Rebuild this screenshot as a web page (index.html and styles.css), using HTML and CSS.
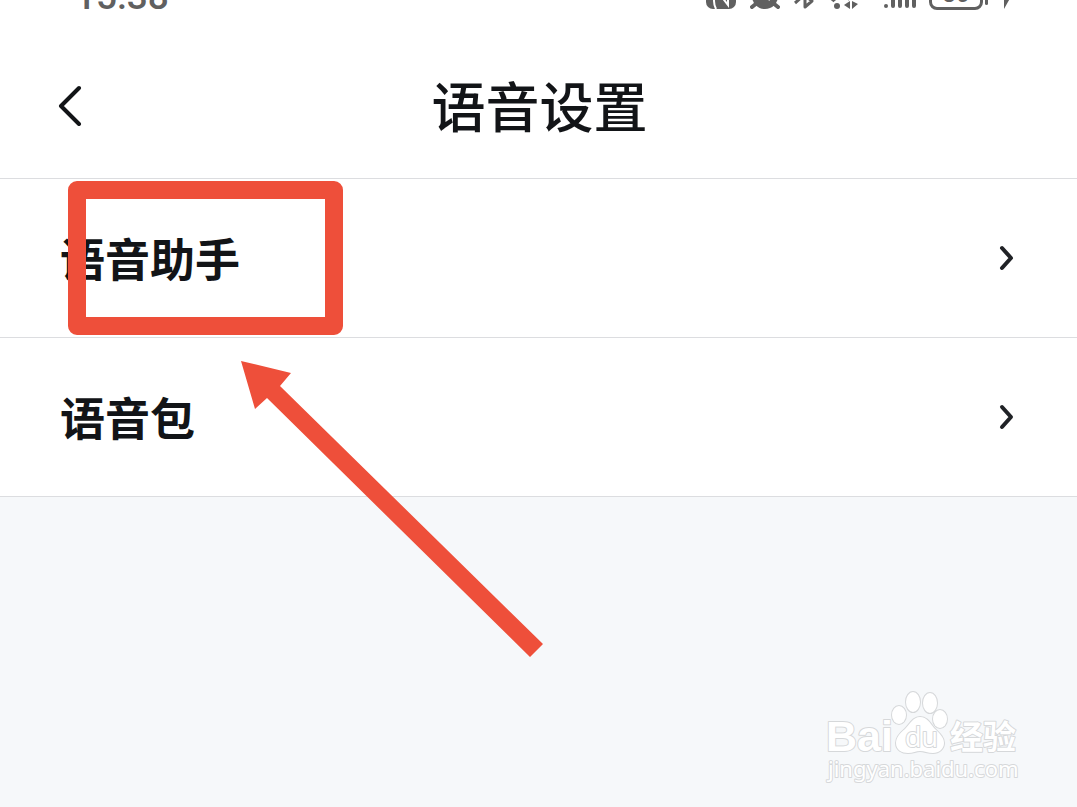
FILE: index.html
```html
<!DOCTYPE html>
<html lang="zh-CN">
<head>
    <meta charset="UTF-8">
    <meta name="viewport" content="width=device-width, initial-scale=1.0">
    <title>语音设置</title>
    <link rel="stylesheet" href="styles.css">
</head>
<body>
    <div class="status-bar">
        <span class="clock">15:38</span>
        <div class="status-icons">
            <!-- nfc -->
            <svg width="30" height="30" viewBox="0 0 30 30">
                <rect x="0" y="1" width="30" height="28" rx="7" fill="#606060"/>
                <path d="M8 5v16q0 4 2 8M22 5v20L12 12" fill="none" stroke="#fff" stroke-width="2"/>
            </svg>
            <!-- alarm -->
            <svg width="30" height="30" viewBox="0 0 30 30">
                <circle cx="15" cy="16" r="13" fill="#606060"/>
                <path d="M2 27l5-4M28 27l-5-4M2 6l6-4M28 6l-6-4" stroke="#606060" stroke-width="4" stroke-linecap="round"/>
                <path d="M15 9v8l5 3" fill="none" stroke="#fff" stroke-width="2"/>
            </svg>
            <!-- bluetooth -->
            <svg width="22" height="30" viewBox="0 0 22 30">
                <path d="M1 23L17 9l-6-7v25l7-6L1 8" fill="none" stroke="#606060" stroke-width="3" stroke-linejoin="round"/>
            </svg>
            <!-- wifi -->
            <svg width="28" height="30" viewBox="0 0 28 30">
                <path d="M1 14a18 18 0 0 1 25 0M2 21a13 13 0 0 1 18-2" fill="none" stroke="#606060" stroke-width="4" stroke-dasharray="5 3"/>
                <circle cx="7" cy="26" r="3" fill="#606060"/>
                <path d="M20 21v8l-6-4zM22 21v8l6-5z" fill="#606060"/>
            </svg>
            <!-- signal -->
            <svg class="signal" width="33" height="30" viewBox="0 0 33 30">
                <circle cx="2" cy="26" r="2" fill="#606060"/>
                <path d="M9 20v6M16 15v11M23 10v16M30 5v21" stroke="#606060" stroke-width="4" stroke-linecap="round"/>
            </svg>
            <span class="battery">80</span>
            <!-- charging -->
            <svg class="bolt" width="12" height="30" viewBox="0 0 12 30">
                <path d="M7 6L0 19h3v10l9-16H7z" fill="#606060"/>
            </svg>
        </div>
    </div>

    <header class="header">
        <button class="back-btn" aria-label="返回">
            <svg width="26" height="42" viewBox="0 0 26 42">
                <path d="M21 4L3 22l18 18" fill="none" stroke="#121417" stroke-width="4" stroke-linecap="round" stroke-linejoin="round"/>
            </svg>
        </button>
        <h1 class="title">语音设置</h1>
    </header>

    <main class="list">
        <a class="row" href="#">
            <span>语音助手</span>
            <svg class="chevron" width="16" height="28" viewBox="0 0 16 28">
                <path d="M3 4l9 10-9 10" fill="none" stroke="#202226" stroke-width="4" stroke-linecap="round" stroke-linejoin="round"/>
            </svg>
        </a>
        <a class="row" href="#">
            <span>语音包</span>
            <svg class="chevron" width="16" height="28" viewBox="0 0 16 28">
                <path d="M3 4l9 10-9 10" fill="none" stroke="#202226" stroke-width="4" stroke-linecap="round" stroke-linejoin="round"/>
            </svg>
        </a>
        <div class="mark-box"></div>
        <svg class="mark-arrow" width="304" height="298" viewBox="0 0 304 298">
            <path d="M1 1l50 12-11 13 263 258-13 13L27 38 15 49z" fill="#ee4f3a"/>
        </svg>
    </main>

    <footer class="footer">
        <svg class="watermark" width="204" height="104" viewBox="0 0 204 104">
            <g fill="#fff" stroke="#d6d8da" stroke-width="2" stroke-linejoin="round" paint-order="stroke">
                <text class="wm-logo" x="6" y="62">Bai</text>
                <ellipse cx="79" cy="26" rx="7" ry="9"/>
                <ellipse cx="93" cy="13" rx="7" ry="10"/>
                <ellipse cx="110" cy="14" rx="7" ry="10"/>
                <ellipse cx="120" cy="30" rx="7" ry="9"/>
                <path d="M100 28c-7 0-10 7-15 12-6 5-9 9-9 14 0 7 6 10 12 10 5 0 8-2 12-2s8 2 13 2c6 0 11-4 11-10s-5-10-10-15c-4-5-7-11-14-11z"/>
                <text class="wm-du" x="85" y="58">du</text>
                <text class="wm-cn" x="130" y="60">经验</text>
                <text class="wm-url" x="8" y="88">jingyan.baidu.com</text>
            </g>
        </svg>
    </footer>
</body>
</html>
```
FILE: styles.css
```css
* {
    box-sizing: border-box;
}

body {
    margin: 0;
    min-height: 100vh;
    display: flex;
    flex-direction: column;
    overflow-x: hidden;
    background-color: #f6f8fa;
    color: #121417;
    font-family: "Noto Sans CJK SC", sans-serif;
}

.status-bar {
    display: flex;
    justify-content: space-between;
    align-items: flex-start;
    height: 60px;
    margin-top: -24px;
    padding: 4px 64px 0 75px;
    background-color: #fff;
    color: #606060;
}

.clock {
    font-family: Roboto, sans-serif;
    font-size: 37px;
    font-weight: 500;
    line-height: 34px;
}

.status-icons {
    display: flex;
    gap: 14px;
}

.status-icons svg {
    display: block;
}

.signal {
    margin: 0 -2px 0 12px;
}

.battery {
    position: relative;
    width: 54px;
    height: 30px;
    border: 3px solid #606060;
    border-radius: 8px;
    font-family: Roboto, sans-serif;
    font-size: 24px;
    font-weight: 500;
    line-height: 22px;
    text-align: center;
}

.battery::after {
    content: "";
    position: absolute;
    right: -8px;
    top: 8px;
    width: 3px;
    height: 14px;
    border-radius: 2px;
    background-color: #606060;
}

.bolt {
    margin-left: 4px;
}

.header {
    display: grid;
    grid-template-columns: 1fr auto 1fr;
    align-items: center;
    height: 143px;
    padding: 0 56px 4px 58px;
    background-color: #fff;
    border-bottom: 1px solid #dcdde0;
}

.back-btn {
    justify-self: start;
    padding: 0;
    border: none;
    background: none;
    cursor: pointer;
}

.back-btn svg {
    display: block;
}

.title {
    margin: 0;
    font-size: 54px;
    font-weight: 500;
    line-height: 72px;
}

.list {
    position: relative;
    background-color: #fff;
}

.row {
    display: flex;
    justify-content: space-between;
    align-items: center;
    height: 159px;
    padding: 0 62px 0 60px;
    border-bottom: 1px solid #dcdde0;
    color: #121417;
    font-size: 45px;
    font-weight: 700;
    line-height: 60px;
    text-decoration: none;
}

.mark-box {
    position: absolute;
    left: 68px;
    top: 2px;
    width: 275px;
    height: 154px;
    border: 18px solid #ee4f3a;
    border-radius: 9px;
    pointer-events: none;
}

.mark-arrow {
    position: absolute;
    left: 240px;
    top: 181px;
    z-index: 1;
    pointer-events: none;
}

.footer {
    display: flex;
    flex: 1;
    justify-content: flex-end;
    align-items: flex-end;
    padding: 0 53px 14px;
}

.watermark {
    display: block;
}

.wm-logo {
    font: 700 43px "Liberation Sans", sans-serif;
}

.wm-du {
    font: 400 27px "Open Sans", sans-serif;
}

.wm-cn {
    font: 700 33px "Noto Sans CJK SC", sans-serif;
}

.wm-url {
    font: 400 22px "Noto Sans", sans-serif;
}
```
